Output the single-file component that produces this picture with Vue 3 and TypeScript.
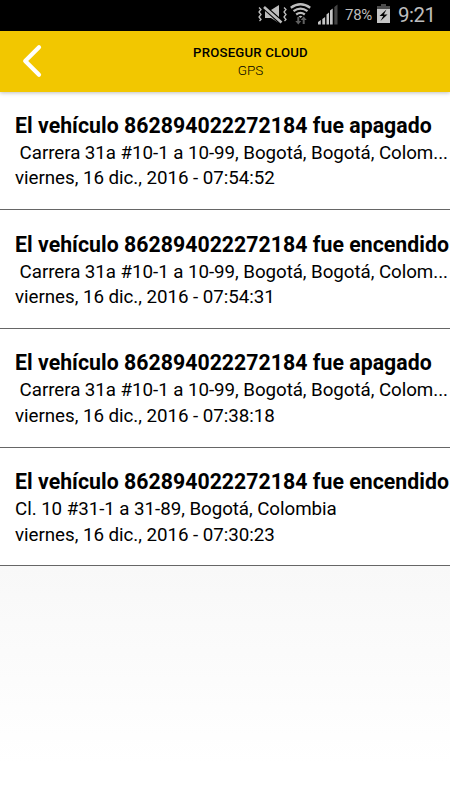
<script setup lang="ts">
interface VehicleEvent {
  id: number
  title: string
  address: string
  date: string
}

const vehicle = '862894022272184'
const events: VehicleEvent[] = [
  { id: 1, title: `El vehículo ${vehicle} fue apagado`, address: ' Carrera 31a #10-1 a 10-99, Bogotá, Bogotá, Colom...', date: 'viernes, 16 dic., 2016 - 07:54:52' },
  { id: 2, title: `El vehículo ${vehicle} fue encendido`, address: ' Carrera 31a #10-1 a 10-99, Bogotá, Bogotá, Colom...', date: 'viernes, 16 dic., 2016 - 07:54:31' },
  { id: 3, title: `El vehículo ${vehicle} fue apagado`, address: ' Carrera 31a #10-1 a 10-99, Bogotá, Bogotá, Colom...', date: 'viernes, 16 dic., 2016 - 07:38:18' },
  { id: 4, title: `El vehículo ${vehicle} fue encendido`, address: 'Cl. 10 #31-1 a 31-89, Bogotá, Colombia', date: 'viernes, 16 dic., 2016 - 07:30:23' },
]
</script>

<template>
  <div class="screen">
    <div class="status">
      <svg class="status-icons" width="84" height="31" viewBox="256 0 84 31" aria-hidden="true">
        <path d="M265 10h6l8-5v18l-8-5h-6z" fill="#bdbdbd" />
        <path d="M263 6l19 17" stroke="#000" stroke-width="5" />
        <path d="M264 7l17.500 15.500" stroke="#bdbdbd" stroke-width="2.600" />
        <g fill="none" stroke="#bdbdbd" stroke-width="1.300">
          <path d="M259 7.500l2 2-2 2.500 2 2.500-2 2.500 2 2.500-1.500 1.500" />
          <path d="M284 7.500l2 2-2 2.500 2 2.500-2 2.500 2 2.500-1.500 1.500" />
        </g>
        <g fill="none" stroke="#bdbdbd" stroke-width="2.300">
          <path d="M290.800 7.800Q300.500.8 310.200 7.800" />
          <path d="M293.500 11.200Q300.500 6 307.500 11.200" />
          <path d="M296.200 14.500Q300.500 11.300 304.800 14.500" />
        </g>
        <path d="M298.500 16.300Q300.500 15 302.500 16.300L300.500 18z" fill="#bdbdbd" />
        <path d="M297.300 17h2v4h2l-3 3.500-3-3.500h2zM302.700 24h2v-4h2l-3-3.500-3 3.500h2z" fill="#606060" />
        <path d="M318 22l2.800-2v4.500H318zM322.300 19l2.800-2v7.500h-2.800zM326.500 14.500l2.500-2v12h-2.500zM330 10.500l2.700-2v16H330z" fill="#c5c5c5" />
        <path d="M334.300 7l3.200-2.500v20h-3.200z" fill="#444" />
      </svg>
      <span class="percent">78%</span>
      <svg class="battery" width="14" height="31" viewBox="376 0 14 31" aria-hidden="true">
        <path d="M377 9V6h4V4h5v2h4v3z" fill="#4c4c4c" />
        <path d="M377 9h13v14h-13z" fill="#c5c5c5" />
        <path d="M386.500 9.500l-7 6.500h3.700l-2.700 5 7-6.500h-3.700z" fill="#000" />
      </svg>
      <span class="clock">9:21</span>
    </div>

    <header class="bar">
      <button class="back" type="button" aria-label="Atrás">
        <svg width="20" height="34" viewBox="0 0 20 34">
          <path d="M17 3.200L3.200 17 17 30.800" fill="none" stroke="#fff" stroke-width="4.200" stroke-linecap="round" stroke-linejoin="round" />
        </svg>
      </button>
      <div class="heading">
        <h1>PROSEGUR CLOUD</h1>
        <p>GPS</p>
      </div>
    </header>

    <main class="content">
      <article v-for="event in events" :key="event.id" class="event">
        <h2>{{ event.title }}</h2>
        <p class="address">{{ event.address }}</p>
        <p class="date">{{ event.date }}</p>
      </article>
    </main>
  </div>
</template>

<style>
body { margin: 0; }
</style>

<style scoped>
.screen {
  width: 450px;
  height: 800px;
  overflow: hidden;
  display: flex;
  flex-direction: column;
  font-family: Roboto, "Liberation Sans", sans-serif;
  color: #000;
}
h1, h2, p { margin: 0; }
.status {
  flex: none;
  height: 31px;
  background: #000;
  color: #bdbdbd;
  display: flex;
  align-items: center;
  padding-left: 256px;
}
.status svg { flex: none; display: block; }
.percent {
  width: 31px;
  padding-left: 5px;
  font-size: 15px;
  line-height: 31px;
  letter-spacing: -0.3px;
}
.clock {
  padding-left: 8px;
  font-size: 20.500px;
  line-height: 31px;
  letter-spacing: -0.5px;
}
.bar {
  flex: none;
  height: 60.500px;
  background: #f2c700;
  display: grid;
  grid-template-columns: 50px 1fr;
  align-items: center;
  z-index: 1;
  box-shadow: 0 1px 4px rgba(0, 0, 0, 0.25);
}
.back {
  display: flex;
  width: 50px;
  height: 60px;
  padding: 0 0 0 22px;
  border: 0;
  background: none;
  align-items: center;
}
.back svg { flex: none; }
.heading { text-align: center; padding-left: 1px; }
.heading h1 {
  padding-top: 1px;
  font-size: 13.200px;
  line-height: 18px;
  font-weight: 500;
  letter-spacing: 0.2px;
}
.heading p {
  font-size: 13.500px;
  line-height: 17px;
  font-weight: 300;
  letter-spacing: 0;
}
.content {
  flex: 1;
  background: linear-gradient(#f6f6f6 0, #f8f8f8 67%, #fff 95%);
}
.event {
  box-sizing: border-box;
  height: 118.700px;
  padding: 21.400px 0 0 15px;
  background: #fff;
  border-bottom: 1px solid #666;
  white-space: pre;
}
.event h2 {
  font-size: 21.250px;
  line-height: 26px;
  font-weight: 700;
  letter-spacing: 0.040px;
}
.address, .date {
  font-size: 18.750px;
  line-height: 25.500px;
  letter-spacing: -0.040px;
}
.address { padding-top: 2.100px; letter-spacing: -0.055px; }
</style>
